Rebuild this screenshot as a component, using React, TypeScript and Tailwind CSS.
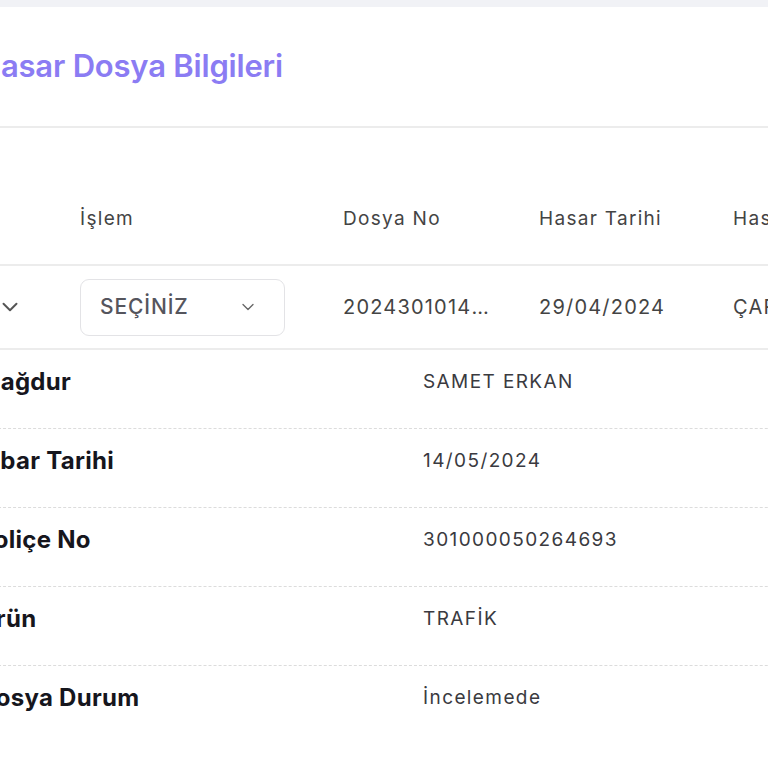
import { ChevronDown } from 'lucide-react'

const details = [
  { label: 'Mağdur', value: 'SAMET ERKAN' },
  { label: 'İhbar Tarihi', value: '14/05/2024' },
  { label: 'Poliçe No', value: '301000050264693' },
  { label: 'Ürün', value: 'TRAFİK' },
  { label: 'Dosya Durum', value: 'İncelemede' },
]

export default function App() {
  return (
    <div
      className="w-[768px] h-[768px] overflow-hidden bg-white"
      style={{ fontFamily: 'Inter, "Noto Sans", sans-serif' }}
    >
      {/* page background strip */}
      <div className="h-[7px] bg-[#f1f2f6]" />

      <div className="ml-[-22px] w-[900px] whitespace-nowrap">
        {/* Title */}
        <div className="h-[121px] flex items-center border-b-2 border-[#ececec]">
          <h1 className="text-[31px] font-semibold text-[#8b7cf3] tracking-[-0.2px] pb-[1px]">
            Hasar Dosya Bilgileri
          </h1>
        </div>

        {/* Table */}
        <div className="pt-[45px]">
          <div className="flex h-[93px] items-center pt-[2px] border-b-2 border-[#ececec] text-[19px] text-[#444] tracking-[1.3px]">
            <div className="w-[102px]" />
            <div className="w-[263px]">İşlem</div>
            <div className="w-[196px]">Dosya No</div>
            <div className="w-[194px]">Hasar Tarihi</div>
            <div>Hasar Türü</div>
          </div>

          <div className="flex h-[84px] items-center border-b-2 border-[#ececec] text-[20px] text-[#444] tracking-[1.2px]">
            <div className="w-[102px] flex">
              <ChevronDown className="ml-[19px] w-[26px] h-[26px] text-[#555]" strokeWidth={1.8} />
            </div>
            <div className="w-[263px]">
              <div className="w-[205px] h-[57px] rounded-[9px] border border-[#e3e3e6] flex items-center pl-[19px] pr-[26px] justify-between">
                <span className="text-[21px] font-medium text-[#55555d] tracking-[0.9px]">SEÇİNİZ</span>
                <ChevronDown className="w-[20px] h-[20px] text-[#666]" strokeWidth={1.6} />
              </div>
            </div>
            <div className="w-[196px]">
              <span className="block w-[154px] overflow-hidden text-ellipsis">2024301014592</span>
            </div>
            <div className="w-[194px]">29/04/2024</div>
            <div>ÇARPMA</div>
          </div>
        </div>

        {/* Details */}
        <div>
          {details.map((d, i) => (
            <div
              key={d.label}
              className={`flex h-[79px] pt-[16px] ${
                i < details.length - 1 ? 'border-b border-dashed border-[#dcdcdc]' : ''
              }`}
            >
              <div className="w-[445px] text-[24px] leading-[32px] font-bold text-[#16161d] tracking-[0.3px]">
                {d.label}
              </div>
              <div className="text-[19px] leading-[32px] text-[#3a3a40] tracking-[1.4px]">{d.value}</div>
            </div>
          ))}
        </div>
      </div>
    </div>
  )
}
